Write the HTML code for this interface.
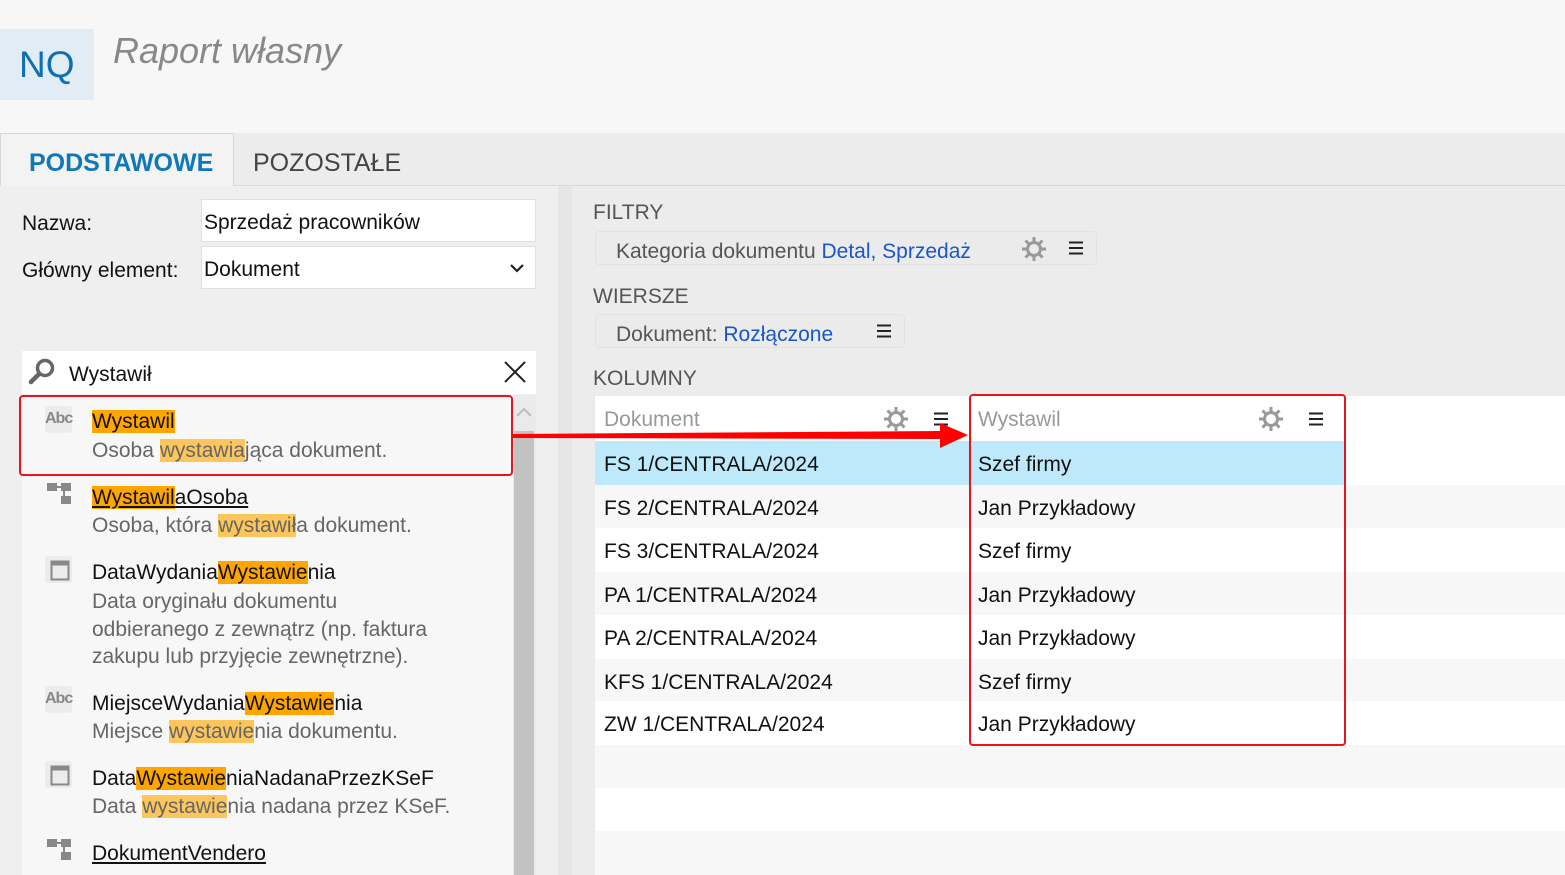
<!DOCTYPE html>
<html><head><meta charset="utf-8"><style>
*{margin:0;padding:0;box-sizing:border-box}
body{width:1565px;height:875px;overflow:hidden;background:#ececec;font-family:"Liberation Sans",sans-serif;font-size:21px;color:#111;position:relative}
.a{position:absolute;white-space:nowrap}
.hl{background:#ffa500}
.hl2{background:#fdc65c}
.sub{color:#666}
.ico{position:absolute;width:27px;height:27px;background:#ececec;border-radius:3px;color:#888;font-size:16px;font-weight:bold;text-align:center;line-height:26px;letter-spacing:-1px}
.row{position:absolute;left:595px;width:970px;height:44px}
.c1{position:absolute;left:9px;top:12px}
.c2{position:absolute;left:383px;top:12px}
</style></head><body>
<div class="a" style="left:0;top:0;width:1565px;height:133px;background:#f7f7f7"></div>
<div class="a" style="left:0;top:29px;width:94px;height:71px;background:#e1ecf4"></div>
<div class="a" style="left:19px;top:44px;font-size:37px;color:#0f6fb5">NQ</div>
<div class="a" style="left:113px;top:30px;font-size:36px;color:#888;font-style:italic">Raport własny</div>
<div class="a" style="left:0;top:133px;width:1565px;height:53px;background:#ececec;border-bottom:1px solid #d8d8d8"></div>
<div class="a" style="left:0;top:133px;width:234px;height:53px;background:#f3f3f3;border:1px solid #d8d8d8;border-bottom:none"></div>
<div class="a" style="left:29px;top:149px;font-size:25px;font-weight:bold;color:#0f78b8">PODSTAWOWE</div>
<div class="a" style="left:253px;top:149px;font-size:25px;color:#444">POZOSTAŁE</div>
<div class="a" style="left:0;top:186px;width:558px;height:689px;background:#efefef"></div>
<div class="a" style="left:558px;top:186px;width:14px;height:689px;background:#e6e6e6"></div>
<div class="a" style="left:22px;top:212px">Nazwa:</div>
<div class="a" style="left:201px;top:199px;width:335px;height:43px;background:#fff;border:1px solid #e0e0e0"></div>
<div class="a" style="left:204px;top:211px">Sprzedaż pracowników</div>
<div class="a" style="left:22px;top:259px">Główny element:</div>
<div class="a" style="left:201px;top:246px;width:335px;height:43px;background:#fff;border:1px solid #e0e0e0"></div>
<div class="a" style="left:204px;top:258px">Dokument</div>
<svg class="a" style="left:509px;top:263px" width="16" height="10"><path d="M2 2l6 6 6-6" fill="none" stroke="#222" stroke-width="2.2"/></svg>
<div class="a" style="left:22px;top:351px;width:514px;height:43px;background:#fff"></div>
<svg class="a" style="left:28px;top:357px" width="30" height="30"><circle cx="17" cy="11" r="7.5" fill="none" stroke="#666" stroke-width="3.5"/><path d="M11 17l-8 8" stroke="#666" stroke-width="4.5" stroke-linecap="round"/></svg>
<div class="a" style="left:69px;top:363px">Wystawił</div>
<svg class="a" style="left:503px;top:360px" width="24" height="24"><path d="M2 2l20 20M22 2L2 22" stroke="#222" stroke-width="2"/></svg>
<div class="a" style="left:22px;top:395px;width:514px;height:480px;background:#f7f7f7"></div>
<div class="a" style="left:513px;top:395px;width:23px;height:480px;background:#eaeaea"></div>
<div class="a" style="left:514px;top:431px;width:20px;height:444px;background:#c2c2c2"></div>
<svg class="a" style="left:515px;top:406px" width="18" height="12"><path d="M2 10l7-7 7 7" fill="none" stroke="#bbb" stroke-width="2"/></svg>
<div class="ico" style="left:45px;top:406px">Abc</div>
<div class="a" style="left:92px;top:410px"><span class="hl">Wystawil</span></div>
<div class="a sub" style="left:92px;top:439px">Osoba <span class="hl2">wystawia</span>jąca dokument.</div>
<div class="a" style="left:19px;top:395px;width:494px;height:81px;border:2px solid #e8141c;border-radius:4px"></div>
<svg class="a" style="left:47px;top:483px" width="28" height="24"><rect x="0" y="0" width="10" height="8" fill="#888"/><rect x="14" y="0" width="10" height="8" fill="#888"/><rect x="14" y="13" width="10" height="8" fill="#888"/><path d="M10 4h4M17 8v5" stroke="#888" stroke-width="2"/></svg>
<div class="a" style="left:92px;top:486px;text-decoration:underline"><span class="hl">Wystawil</span>aOsoba</div>
<div class="a sub" style="left:92px;top:514px">Osoba, która <span class="hl2">wystawił</span>a dokument.</div>
<div class="ico" style="left:45px;top:556px"></div>
<svg class="a" style="left:50px;top:559px" width="20" height="22"><rect x="1.5" y="2.5" width="17" height="18" fill="none" stroke="#888" stroke-width="2"/><rect x="1.5" y="2.5" width="17" height="4" fill="#888"/></svg>
<div class="a" style="left:92px;top:561px">DataWydania<span class="hl">Wystawie</span>nia</div>
<div class="a sub" style="left:92px;top:588px;line-height:27.5px">Data oryginału dokumentu<br>odbieranego z zewnątrz (np. faktura<br>zakupu lub przyjęcie zewnętrzne).</div>
<div class="ico" style="left:45px;top:686px">Abc</div>
<div class="a" style="left:92px;top:692px">MiejsceWydania<span class="hl">Wystawie</span>nia</div>
<div class="a sub" style="left:92px;top:720px">Miejsce <span class="hl2">wystawie</span>nia dokumentu.</div>
<div class="ico" style="left:45px;top:761px"></div>
<svg class="a" style="left:50px;top:764px" width="20" height="22"><rect x="1.5" y="2.5" width="17" height="18" fill="none" stroke="#888" stroke-width="2"/><rect x="1.5" y="2.5" width="17" height="4" fill="#888"/></svg>
<div class="a" style="left:92px;top:767px;width:342px;overflow:hidden">Data<span class="hl">Wystawie</span>niaNadanaPrzezKSeF</div>
<div class="a sub" style="left:92px;top:795px">Data <span class="hl2">wystawie</span>nia nadana przez KSeF.</div>
<svg class="a" style="left:47px;top:839px" width="28" height="24"><rect x="0" y="0" width="10" height="8" fill="#888"/><rect x="14" y="0" width="10" height="8" fill="#888"/><rect x="14" y="13" width="10" height="8" fill="#888"/><path d="M10 4h4M17 8v5" stroke="#888" stroke-width="2"/></svg>
<div class="a" style="left:92px;top:842px;text-decoration:underline">DokumentVendero</div>
<div class="a" style="left:593px;top:201px;color:#555">FILTRY</div>
<div class="a" style="left:595px;top:231px;width:502px;height:34px;background:#ebebeb;border:1px solid #e2e2e2;border-radius:4px"></div>
<div class="a" style="left:616px;top:240px;color:#555">Kategoria dokumentu <span style="color:#1a56c8">Detal, Sprzedaż</span></div>
<div class="a" style="left:593px;top:285px;color:#555">WIERSZE</div>
<div class="a" style="left:595px;top:314px;width:310px;height:34px;background:#ebebeb;border:1px solid #e2e2e2;border-radius:4px"></div>
<div class="a" style="left:616px;top:323px;color:#555">Dokument: <span style="color:#1a56c8">Rozłączone</span></div>
<div class="a" style="left:593px;top:367px;color:#555">KOLUMNY</div>
<div class="a" style="left:595px;top:396px;width:970px;height:45px;background:#fff;box-shadow:0 2px 3px #ddd"></div>
<div class="a" style="left:604px;top:408px;color:#999">Dokument</div>
<div class="a" style="left:978px;top:408px;color:#999">Wystawil</div>
<svg class="a" style="left:1021px;top:236px" width="26" height="26" viewBox="0 0 26 26"><g fill="none" stroke="#999" stroke-width="3"><circle cx="13" cy="13" r="6.5"/><path d="M13 1v5M13 20v5M1 13h5M20 13h5M4.5 4.5l3.5 3.5M18 18l3.5 3.5M4.5 21.5L8 18M18 8l3.5-3.5"/></g></svg>
<svg class="a" style="left:883px;top:406px" width="26" height="26" viewBox="0 0 26 26"><g fill="none" stroke="#999" stroke-width="3"><circle cx="13" cy="13" r="6.5"/><path d="M13 1v5M13 20v5M1 13h5M20 13h5M4.5 4.5l3.5 3.5M18 18l3.5 3.5M4.5 21.5L8 18M18 8l3.5-3.5"/></g></svg>
<svg class="a" style="left:1258px;top:406px" width="26" height="26" viewBox="0 0 26 26"><g fill="none" stroke="#999" stroke-width="3"><circle cx="13" cy="13" r="6.5"/><path d="M13 1v5M13 20v5M1 13h5M20 13h5M4.5 4.5l3.5 3.5M18 18l3.5 3.5M4.5 21.5L8 18M18 8l3.5-3.5"/></g></svg>
<svg class="a" style="left:1069px;top:241px" width="14" height="14"><path d="M0 1.5h14M0 7h14M0 12.5h14" stroke="#222" stroke-width="2"/></svg>
<svg class="a" style="left:877px;top:324px" width="14" height="14"><path d="M0 1.5h14M0 7h14M0 12.5h14" stroke="#222" stroke-width="2"/></svg>
<svg class="a" style="left:934px;top:412px" width="14" height="14"><path d="M0 1.5h14M0 7h14M0 12.5h14" stroke="#222" stroke-width="2"/></svg>
<svg class="a" style="left:1309px;top:412px" width="14" height="14"><path d="M0 1.5h14M0 7h14M0 12.5h14" stroke="#222" stroke-width="2"/></svg>
<div class="row" style="top:441px;background:#bde9fb;width:750px"><span class="a c1">FS 1/CENTRALA/2024</span><span class="a c2">Szef firmy</span></div>
<div class="row" style="top:441px;left:1345px;width:220px;background:#fff"></div>
<div class="row" style="top:485px;background:#f7f7f7"><span class="a c1">FS 2/CENTRALA/2024</span><span class="a c2">Jan Przykładowy</span></div>
<div class="row" style="top:528px;background:#fff"><span class="a c1">FS 3/CENTRALA/2024</span><span class="a c2">Szef firmy</span></div>
<div class="row" style="top:572px;background:#f7f7f7"><span class="a c1">PA 1/CENTRALA/2024</span><span class="a c2">Jan Przykładowy</span></div>
<div class="row" style="top:615px;background:#fff"><span class="a c1">PA 2/CENTRALA/2024</span><span class="a c2">Jan Przykładowy</span></div>
<div class="row" style="top:659px;background:#f7f7f7"><span class="a c1">KFS 1/CENTRALA/2024</span><span class="a c2">Szef firmy</span></div>
<div class="row" style="top:701px;background:#fff"><span class="a c1">ZW 1/CENTRALA/2024</span><span class="a c2">Jan Przykładowy</span></div>
<div class="row" style="top:745px;background:#f7f7f7"></div>
<div class="row" style="top:788px;background:#fff"></div>
<div class="row" style="top:831px;background:#f7f7f7"></div>
<div class="a" style="left:969px;top:394px;width:377px;height:352px;border:2px solid #e8141c;border-radius:4px"></div>
<svg class="a" style="left:510px;top:420px" width="462" height="34"><path d="M2 14L430 11L430 3L458 15L430 28L430 19L2 18Z" fill="#f00"/></svg>
</body></html>
